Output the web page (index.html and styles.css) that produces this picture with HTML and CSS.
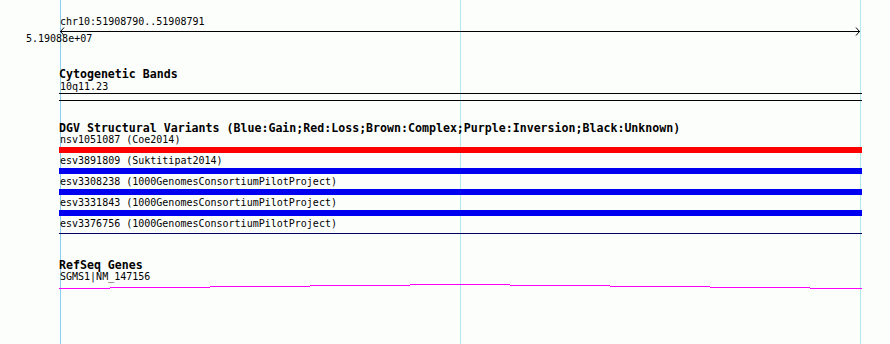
FILE: index.html
```html
<!DOCTYPE html>
<html lang="en">
<head>
    <meta charset="UTF-8">
    <title>chr10:51908790..51908791</title>
    <link rel="stylesheet" href="styles.css">
</head>
<body>

    <div class="canvas">
        <!-- guide lines behind the tracks -->
        <div class="guide guide-left"></div>
        <div class="guide guide-mid"></div>
        <div class="guide guide-right"></div>

        <div class="tracks">
            <section class="ruler">
                <div class="ruler-title">chr10:51908790..51908791</div>
                <svg class="axis" width="803" height="7" viewBox="0 0 803 7">
                    <line x1="1" y1="4.5" x2="801" y2="4.5" stroke="#000" stroke-width="1"/>
                    <polyline points="5,0.5 1.5,4.5 5,8.5" fill="none" stroke="#000" stroke-width="1"/>
                    <polyline points="797,0.5 800.5,4.5 797,8.5" fill="none" stroke="#000" stroke-width="1"/>
                </svg>
                <div class="ruler-label">5.19088e+07</div>
            </section>

            <section class="track track-cyto">
                <h2 class="track-title">Cytogenetic Bands</h2>
                <div class="feature-label">10q11.23</div>
                <div class="band"></div>
            </section>

            <section class="track track-dgv">
                <h2 class="track-title">DGV Structural Variants (Blue:Gain;Red:Loss;Brown:Complex;Purple:Inversion;Black:Unknown)</h2>
                <div class="feature">
                    <div class="feature-label">nsv1051087 (Coe2014)</div>
                    <div class="bar bar-loss"></div>
                </div>
                <div class="feature">
                    <div class="feature-label">esv3891809 (Suktitipat2014)</div>
                    <div class="bar bar-gain"></div>
                </div>
                <div class="feature">
                    <div class="feature-label">esv3308238 (1000GenomesConsortiumPilotProject)</div>
                    <div class="bar bar-gain"></div>
                </div>
                <div class="feature">
                    <div class="feature-label">esv3331843 (1000GenomesConsortiumPilotProject)</div>
                    <div class="bar bar-gain"></div>
                </div>
                <div class="feature">
                    <div class="feature-label">esv3376756 (1000GenomesConsortiumPilotProject)</div>
                    <div class="bar bar-thin"></div>
                </div>
            </section>

            <section class="track track-refseq">
                <h2 class="track-title">RefSeq Genes</h2>
                <div class="feature-label">SGMS1|NM_147156</div>
                <svg class="gene" width="803" height="8" viewBox="0 0 803 8" shape-rendering="crispEdges">
                    <g fill="#ff00ff">
                        <rect x="0" y="6" width="51" height="1"/>
                        <rect x="51" y="5" width="100" height="1"/>
                        <rect x="151" y="4" width="100" height="1"/>
                        <rect x="251" y="3" width="100" height="1"/>
                        <rect x="351" y="2" width="100" height="1"/>
                        <rect x="451" y="3" width="100" height="1"/>
                        <rect x="551" y="4" width="100" height="1"/>
                        <rect x="651" y="5" width="100" height="1"/>
                        <rect x="751" y="6" width="52" height="1"/>
                    </g>
                </svg>
            </section>
        </div>
    </div>

</body>
</html>
```

FILE: styles.css
```css
/* Global Style */
body {
    margin: 0;
    background-color: #fcfefc;
    color: #000;
    font-family: 'DejaVu Sans Mono', 'Liberation Mono', monospace;
}

.canvas {
    position: relative;
    width: 890px;
    height: 344px;
    overflow: hidden;
}

/* vertical guides, drawn under the tracks */
.guide {
    position: absolute;
    top: 0;
    bottom: 0;
    width: 1px;
    background-color: #b0eaf0;
}

.guide-left {
    left: 60px;
    background-color: #8ccdf2;
}

.guide-mid {
    left: 460px;
}

.guide-right {
    left: 860px;
}

.tracks {
    position: relative;
    width: 803px;
    margin-left: 59px;
    padding-top: 17px;
}

/* ruler */
.ruler-title,
.ruler-label,
.feature-label {
    font-size: 10px;
    line-height: 10px;
    height: 10px;
    white-space: nowrap;
}

.ruler-title {
    padding-left: 1px;
}

.axis {
    display: block;
    overflow: visible;
}

.ruler-label {
    margin-left: -33px;
}

/* tracks */
.track-title {
    margin: 0;
    font-size: 11.6px;
    line-height: 12px;
    height: 12px;
    font-weight: bold;
    white-space: nowrap;
}

.track-cyto {
    margin-top: 24px;
}

.track-dgv {
    margin-top: 21px;
}

.track-refseq {
    margin-top: 20px;
}

.feature-label {
    padding-left: 1px;
}

.track-cyto .feature-label {
    margin-top: 2px;
}

.track-refseq .feature-label {
    margin-top: 1px;
}

.band {
    margin-top: 1px;
    height: 6px;
    border-top: 1px solid #000;
    border-bottom: 1px solid #000;
}

.feature {
    padding: 1px 0 2px;
}

.bar {
    margin-top: 2px;
    height: 6px;
}

.bar-loss {
    background-color: #ff0000;
}

.bar-gain {
    background-color: #0000f0;
}

.bar-thin {
    height: 1px;
    margin: 4px 0 3px;
    background-color: #000060;
}

.gene {
    display: block;
}
```
